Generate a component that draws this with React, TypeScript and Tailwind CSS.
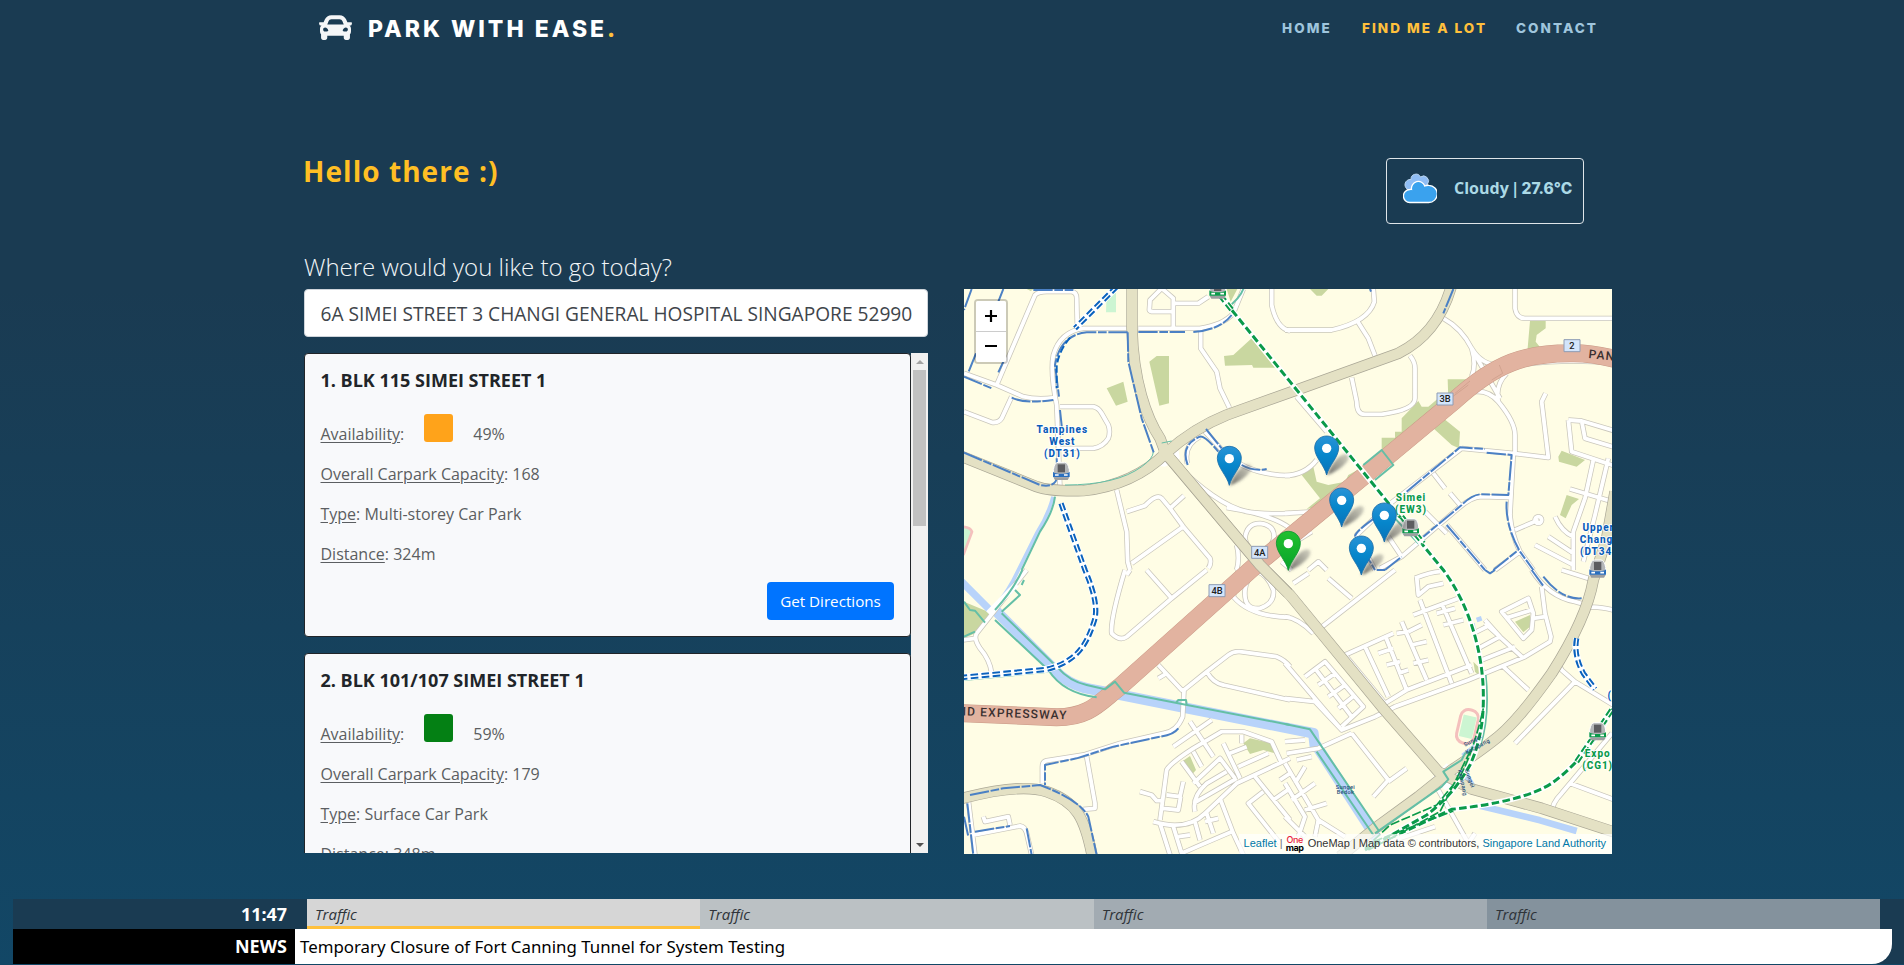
import React from "react";
import { FaCar } from "react-icons/fa";

type Quad = { x: number; y: number; d: string };

// Map artwork is drawn on a sheet at three units per CSS pixel, split in four tiles.
const parks: Quad[] = [
  { x: 0, y: 0, d: "M440,310L490,290L503,350L468,362Z M568,230L590,213L627,213L627,355L598,362Z M792,213L820,210L875,160L945,248L880,248L876,240L795,242Z M800,12L832,12L812,50Z M200,12L222,12L212,18Z" },
  { x: 975, y: 0, d: "M75,12L130,12L110,32L95,32Z M735,108L782,108L782,130L755,150L752,170L772,195L727,200Z M488,283L555,283L490,345Z M350,400L400,348L410,365L430,365L460,340L475,400L525,440L522,490L500,480L440,425L350,490L290,520L290,458L330,458L330,440L350,440Z M50,570L85,545L95,590L130,600L180,590L190,570L235,545L240,575L130,660L65,672L105,640Z M820,515L830,497L900,525L875,545L822,530Z M845,630L882,642L860,660L842,700L825,690Z" },
  { x: 0, y: 855, d: "M12,95L95,130L45,190L12,205Z M665,575L690,558L708,600L692,618Z M850,520L870,505L935,520L945,550L910,540L870,552Z" },
  { x: 975, y: 855, d: "M690,155L735,135L735,170L715,187Z M565,275L580,290L582,318L570,305Z M480,10L515,60L510,70Z" },
];

const minor: Quad[] = [
  {
    x: 0,
    y: 0,
    d: "M110,300L225,30Q235,20 260,20L335,20Q350,22 350,40L352,130 M12,265L110,300L190,335Q230,345 285,338 M155,335L125,400Q115,415 95,412L12,380 M500,130L370,130Q300,140 280,210Q270,260 290,360L300,610 M300,365L400,365Q415,368 425,385L445,420Q452,440 445,460Q430,485 400,490L300,490 M535,130L720,130Q790,120 820,85L850,12 M640,125L640,40L605,10L570,45L568,75Q570,80 580,80L640,80 M645,55L715,55L745,35 M722,135L722,190L770,260L780,310L808,368 M935,12L935,60Q950,130 990,138 M470,615L500,740L503,830L510,855 M500,680L555,662Q590,625 605,640L630,670L672,632 M630,670L670,725L750,820Q755,835 745,850 M670,725L515,835 M640,530Q770,660 860,680Q900,688 990,685 M720,455Q670,480 682,535 M735,440L800,510Q870,570 990,572 M855,760Q860,715 900,715Q945,720 942,760Q930,800 895,800Q860,795 855,760 M800,668Q940,690 990,730 M830,780Q840,820 830,855",
  },
  {
    x: 975,
    y: 0,
    d: "M0,135L140,135Q250,110 268,50L265,12 M215,105L250,160L270,212 M200,278L215,350Q215,388 240,388L290,388Q390,375 390,340L390,250Q390,230 375,212 M475,100Q530,130 560,190Q590,240 640,240 M560,190Q575,240 560,275 M565,200L645,340 M690,12L690,70Q695,100 720,100L990,100 M570,320Q610,315 640,350Q690,410 690,450L690,510 M665,265Q630,300 640,350 M700,240Q850,220 981,235 M35,335L125,440 M0,572Q60,570 95,525 M0,685L90,680 M530,490L685,505L790,518L770,350L782,325 M530,490L310,660L215,750L270,855 M445,565L480,610 M495,625L525,660 M285,850L350,815L520,670Q560,635 590,635L680,638 M685,505L675,690Q680,750 705,800L745,855 M705,800L630,855 M690,735L760,705 M750,705a10,10 0 1 0 20,0a10,10 0 1 0 -20,0 M485,720L600,855 M420,680L485,745 M310,755L350,815 M850,405L890,408L990,438 M850,405L860,500L990,543 M890,408L900,460L990,487 M925,525L900,640L865,740L865,855 M970,520L930,690L895,830 M855,612L990,652 M810,695Q830,740 865,755 M790,755L865,805 M750,780L865,840 M70,855L100,830L125,855 M0,790L80,740 M-10,830L20,855",
  },
  {
    x: 0,
    y: 855,
    d: "M200,0L50,190Q40,205 60,235Q90,270 95,310 M10,210L45,205 M495,0Q450,150 455,190Q480,215 500,200L635,85L740,0 M560,0L635,85 M510,0L500,15 M835,0L820,80Q870,140 990,142 M855,60Q850,120 900,115Q945,100 940,60Q920,10 890,5Q860,20 855,60 M595,285L665,360L672,360 M595,325L620,310 M672,360L740,305L805,255Q820,243 840,245L950,260Q975,270 990,290 M740,305Q760,340 790,345L990,390 M672,360L668,440Q650,485 610,490L480,520L370,555L260,572Q247,575 247,590L247,640 M380,560L405,700L405,715L370,718 M70,740L75,755L145,740L150,765 M40,795L180,768Q195,770 200,790L215,855 M25,690L45,855 M540,665L575,675L590,692L605,692 M600,750L620,600Q630,580 700,535L785,485L850,485L935,515L965,580 M640,530L755,450 M690,455L760,560 M665,575L720,650 M700,640L780,565L825,625 M620,675L660,680L670,635 M610,715L655,720L662,680 M580,755Q680,785 735,730L830,640L990,565 M705,725Q695,680 740,640L800,605 M700,700L830,625 M780,685L820,790L850,855 M600,760L630,855 M640,770L665,850L710,830L815,785 M705,755L720,810 M740,730L760,790 M735,755L775,745 M790,520L840,625 M810,550L860,530 M835,590L925,550 M845,495L845,520 M885,620L990,750 M910,665L865,700L960,820 M960,630L990,610 M940,690L990,655 M700,545L725,590 M655,800L690,795",
  },
  {
    x: 975,
    y: 855,
    d: "M0,140Q40,145 85,190 M105,175L330,0 M130,25L200,85 M25,40L70,10 M390,25Q440,5 465,5 M395,20L400,75L430,50L475,40 M405,90L500,340 M385,135L520,85 M470,100L560,310 M455,130L510,115 M475,165L535,150 M180,255L325,190 M180,255L300,400 M240,230L310,380 M300,195L365,360 M350,155L425,330 M280,250L325,235 M305,285L345,275 M370,185L410,165 M335,190L370,185 M380,225L425,215 M385,280L430,270 M340,310L370,300 M300,400L365,360L560,285 M270,440L330,410L550,330L720,260L795,215L798,200L780,130L770,50 M580,235L645,200L600,150 M590,270L690,230 M565,190L605,170 M600,160L710,260 M650,125L730,85L745,130L740,180L715,205Z M660,145L740,120 M745,145L780,140 M655,290L730,360 M690,520L870,335L990,408 M815,270L830,300L870,335 M0,280L170,480 M60,320L120,275L235,410L170,470 M90,295L200,440 M100,345L150,310 M130,380L180,345 M160,415L210,375 M0,385L90,395L170,480L270,440 M200,490L310,630L265,680 M310,635L365,595 M5,550L100,535L200,490 M0,515L60,510 M0,580L100,750L180,800 M20,690L90,640 M60,720L125,700 M30,640L60,590 M35,570L80,560 M0,640L60,740L40,800 M100,750L90,800 M0,740L60,800 M460,660L550,820L570,790 M800,730Q800,700 830,670L981,490 M855,640L990,690 M740,0Q790,80 870,95L905,105 M900,115Q930,105 990,122 M830,0L920,28 M330,810L450,770",
  },
];

const cycle: Quad[] = [
  {
    x: 0,
    y: 0,
    d: "M35,12L12,75 M130,12L115,50 M48,205L25,262 M130,230L115,262 M12,275L95,310 M155,338Q195,357 280,345 M12,503L240,600Q290,610 292,570L290,520 M300,375L308,450 M220,15L340,15 M503,142L380,142Q300,150 285,240L297,335 M503,142L505,230L545,400L582,505 M535,141L675,141 M700,141Q780,135 815,90 M683,540Q660,480 720,455Q735,452 775,500 M738,432L785,490 M845,540Q880,560 920,552",
  },
  {
    x: 975,
    y: 0,
    d: "M255,12L258,20 M505,12L475,85 M365,620L525,487L600,492 M605,503L680,510L670,630L585,628Q560,630 530,660L415,755 M665,650Q660,720 705,800L745,855 M485,720L600,855 M275,695Q210,740 210,755L270,855 M300,855L350,815 M625,855L700,795",
  },
  {
    x: 0,
    y: 855,
    d: "M655,475Q640,495 600,500L460,530L350,565L255,585L255,645 M30,675L130,655L240,645Q360,690 385,740L410,855 M22,700L40,855 M45,785L150,768 M200,775L215,855 M12,740L25,800",
  },
  { x: 975, y: 855, d: "M740,0L775,48 M775,20Q830,90 890,85 M600,0L615,10L630,0 M275,0L300,0" },
];

const connector: Quad[] = [
  { x: 0, y: 0, d: "M285,635Q280,680 240,740L185,855 M850,12Q840,40 800,70" },
  { x: 975, y: 0, d: "M235,540L290,495L325,540L270,585 M325,695L400,775L420,765" },
  {
    x: 0,
    y: 855,
    d: "M187,0Q160,60 105,120 M192,30L185,45 M165,60L180,75L125,125 M125,130L290,290Q330,335 380,345L435,358L465,335L492,368L990,465 M105,150L265,300Q310,370 410,382 M12,330L265,305 M12,95L30,120L45,122L75,158 M12,200L45,185 M648,398L655,390L678,390L680,402",
  },
  { x: 975, y: 855, d: "M0,462L75,478L280,780 M95,545L265,795 M602,315Q615,440 585,530L540,550L530,570L475,605L490,628L470,650L270,790" },
];

const majors =
  "M516,-10L516,130C520,290 560,400 600,460L617,505L900,840L990,930L1265,1265L1435,1460L1535,1512L1745,1570L1965,1642 M0,512L230,605Q270,620 370,617Q520,600 617,505Q700,430 800,390L990,322L1315,205C1385,170 1445,110 1475,0 M1965,620L1940,760L1900,885Q1880,1000 1775,1165Q1680,1300 1615,1355Q1560,1400 1475,1455L1375,1535L1245,1630L1140,1715 M0,1542C100,1515 200,1500 260,1520C350,1550 375,1600 397,1715";

const expressway = "M0,1284L290,1297C390,1297 420,1250 480,1205L890,838L1225,562L1480,350C1610,230 1700,205 1830,205Q1890,203 1965,222";

const easternLine = "M795,50L990,290L1290,660L1450,855C1550,990 1570,1150 1570,1230Q1572,1350 1530,1440Q1480,1530 1400,1590L1215,1695";
const changiBranch = "M1960,1270Q1880,1420 1775,1495Q1690,1550 1475,1573L1225,1690";
const downtownLoop = "M303,655L375,855Q420,960 402,1010C380,1080 350,1130 260,1153L0,1178";
const downtownEast = "M1850,1060Q1840,1110 1870,1165L1905,1212";

function Layer({ items, ...rest }: { items: Quad[] } & React.SVGProps<SVGPathElement>) {
  return (
    <>
      {items.map((q, i) => (
        <path key={i} d={q.d} transform={`translate(${q.x} ${q.y})`} {...rest} />
      ))}
    </>
  );
}

function Rail({ d, color, double = false }: { d: string; color: string; double?: boolean }) {
  return (
    <g fill="none">
      <path d={d} stroke="#fff" strokeWidth={double ? 21 : 17} />
      <path d={d} stroke={color} strokeWidth={double ? 16 : 9} strokeDasharray="23 10" />
      {double && <path d={d} stroke="#fff" strokeWidth={4} />}
    </g>
  );
}

function Station({ x, y, color }: { x: number; y: number; color: string }) {
  return (
    <g transform={`translate(${x} ${y})`}>
      <path d="M-24,18V-8Q-20,-30 -10,-30H10Q20,-30 24,-8V18Z" fill="#b4b6b8" stroke="#fff" strokeWidth="3" />
      <path d="M-11,-24H11V0H-11Z" fill="#5c5c60" />
      <path d="M-25,-2Q-20,4 0,4Q20,4 25,-2V14H-25Z" fill={color} />
      <path d="M-24,15H24L19,23H-19Z" fill="#9c9ea0" />
      <path d="M-19,8H-8M8,8H19" stroke="#fff" strokeWidth="5" />
    </g>
  );
}

function Shield({ x, y, label }: { x: number; y: number; label: string }) {
  return (
    <g transform={`translate(${x} ${y})`}>
      <rect x="-24" y="-18" width="48" height="36" fill="#d3e5fb" stroke="#8e9cb4" strokeWidth="3" />
      <text y="10" textAnchor="middle" fontFamily="Roboto, sans-serif" fontWeight="500" fontSize="28" fill="#222">
        {label}
      </text>
    </g>
  );
}

function Pin({ x, y, green = false }: { x: number; y: number; green?: boolean }) {
  return (
    <g transform={`translate(${x} ${y})`}>
      <path d="M0,0Q40,-14 62,-42Q74,-64 54,-64Q24,-56 0,0Z" fill="url(#shade)" filter="url(#soft)" />
      <path
        d="M0,-1C-7,-30 -36,-55 -36,-82C-36,-103 -20,-118 0,-118C20,-118 36,-103 36,-82C36,-55 7,-30 0,-1Z"
        fill={green ? "url(#pinGreen)" : "url(#pinBlue)"}
        stroke={green ? "#0c9530" : "#1c6da8"}
        strokeWidth="2.5"
      />
      <circle cy="-81" r="14" fill="#fff" />
    </g>
  );
}

function StationName({ x, y, color, lines }: { x: number; y: number; color: string; lines: string[] }) {
  return (
    <g fontFamily="Roboto, sans-serif" fontWeight="800" fontSize="30" letterSpacing="2.8" fill={color} textAnchor="middle" stroke="#fff" strokeWidth="5" paintOrder="stroke">
      {lines.map((l, i) => (
        <text key={l} x={x} y={y + i * 36}>
          {l}
        </text>
      ))}
    </g>
  );
}

function MapArt() {
  return (
    <svg viewBox="12 12 1944 1695" className="block h-full w-full" fill="none" strokeLinejoin="round">
      <defs>
        <linearGradient id="pinBlue" x1="0" y1="0" x2="0" y2="1">
          <stop offset="0" stopColor="#2a93d6" />
          <stop offset=".5" stopColor="#0686cb" />
          <stop offset="1" stopColor="#0a72b8" />
        </linearGradient>
        <linearGradient id="pinGreen" x1="0" y1="0" x2="0" y2="1">
          <stop offset="0" stopColor="#22c02f" />
          <stop offset="1" stopColor="#08a32a" />
        </linearGradient>
        <linearGradient id="shade" x1="0" y1="1" x2="1" y2="0">
          <stop offset="0" stopColor="#444" stopOpacity=".8" />
          <stop offset="1" stopColor="#666" stopOpacity=".3" />
        </linearGradient>
        <filter id="soft" x="-30%" y="-30%" width="160%" height="160%">
          <feGaussianBlur stdDeviation="5" />
        </filter>
      </defs>
      <rect width="1960" height="1710" fill="#fffde5" />
      <Layer items={parks} fill="#c9d7a0" />
      <path d="M440,24H468V82H438Z" fill="#ccf5d2" />
      <path d="M0,725Q30,725 36,740L10,810" fill="#ccf5d2" stroke="#f4c0bd" strokeWidth="8" />

      <g stroke="#b8d3fa">
        <path d="M0,885L90,975" strokeWidth="22" />
        <path d="M279,635Q265,690 230,745L175,855Q145,920 103,968" strokeWidth="11" />
        <path d="M105,975L275,1145Q320,1200 390,1212L450,1223L660,1265L1060,1345L1065,1385" strokeWidth="32" />
        <path d="M1065,1375L1250,1660" strokeWidth="32" />
        <path d="M1540,1015L1570,1160" strokeWidth="8" />
        <path d="M1550,1005L1565,1000" strokeWidth="14" />
        <path d="M1560,1562L1740,1606L1850,1638" strokeWidth="20" />
        <path d="M1505,1450L1545,1515" strokeWidth="18" />
        <path d="M1510,1415L1555,1380" strokeWidth="20" />
        <path d="M1140,1710L1200,1665" strokeWidth="14" />
      </g>

      <Layer items={minor} stroke="#c9c6bb" strokeWidth="16" />
      <Layer items={minor} stroke="#fff" strokeWidth="11.5" />
      <path d="M1415,1480L1460,1435L1530,1500L1455,1515Z" fill="#fff" />
      <path d="M575,540L650,470L660,520L615,545Z" fill="#fff" />
      <path d="M85,985L170,898" stroke="#fff" strokeWidth="18" />

      <path d={majors} stroke="#aaa796" strokeWidth="34" />
      <path d={majors} stroke="#e4e1c4" strokeWidth="30" />
      <path d="M315,600Q470,600 545,545Q580,520 580,500 M605,474L635,468" stroke="#64bfa6" strokeWidth="3" />
      <path d={expressway} stroke="#c99a87" strokeWidth="54" />
      <path d={expressway} stroke="#e2b3a0" strokeWidth="51" />
      <path d="M1478,335L1525,300 M1485,325L1530,288 M1595,285L1628,265L1618,240" stroke="#c99a87" strokeWidth="2" />
      <path d="M630,520L900,840L985,925" stroke="#aaa796" strokeWidth="34" />
      <path d="M605,490L900,840L1000,941" stroke="#e4e1c4" strokeWidth="30" />

      <Layer items={connector} stroke="#64bfa6" strokeWidth="6" />
      <Layer items={cycle} stroke="#4b80c4" strokeWidth="6" strokeDasharray="58 5 26 5" />

      <g transform="translate(1523 1326) rotate(13)">
        <rect x="-28" y="-52" width="54" height="102" rx="24" stroke="#f4c0bd" strokeWidth="9" fill="#fffde5" />
        <rect x="-20" y="-34" width="40" height="66" fill="#ccf5d2" />
      </g>

      <Rail d="M470,5L345,130" color="#0a62bd" double />
      <path d="M330,158Q295,200 290,245L290,310" stroke="#0a62bd" strokeWidth="6" strokeDasharray="22 9" />
      <Rail d={downtownLoop} color="#0a62bd" double />
      <Rail d={downtownEast} color="#0a62bd" double />
      <Rail d={changiBranch} color="#0a9a4a" />
      <Rail d={easternLine} color="#0a9a4a" />
      <path d="M1215,1690L1290,1620L1430,1560L1500,1475 M1225,1695L1330,1640L1440,1580L1530,1400 M1240,1670L1480,1578 M1500,1475Q1540,1400 1570,1270" stroke="#0a9a4a" strokeWidth="5" strokeDasharray="28 7" />
      <Rail d="M780,30L815,74" color="#0a9a4a" double />
      <Rail d="M1325,695L1390,775" color="#0a9a4a" double />
      <Rail d="M1955,1275L1905,1350L1850,1430" color="#0a9a4a" double />

      <Station x={773} y={18} color="#0a9a4a" />
      <Station x={304} y={562} color="#2a6fbe" />
      <Station x={1352} y={731} color="#0a9a4a" />
      <Station x={1913} y={855} color="#2a6fbe" />
      <Station x={1913} y={1343} color="#0a9a4a" />
      <StationName x={307} y={443} color="#0a5cb8" lines={["Tampines", "West", "(DT31)"]} />
      <StationName x={1353} y={647} color="#0a9a4a" lines={["Simei", "(EW3)"]} />
      <StationName x={1915} y={738} color="#0a5cb8" lines={["Upper", "Changi", "(DT34)"]} />
      <StationName x={1913} y={1415} color="#0a9a4a" lines={["Expo", "(CG1)"]} />
      <StationName x={1949} y={1241} color="#0a5cb8" lines={["("]} />
      <g fontFamily="Roboto, sans-serif" fontSize="17" fontWeight="500" fill="#27507a" letterSpacing="1">
        <text x="1127" y="1511">Sungei</text>
        <text x="1130" y="1528">Bedok</text>
        <text transform="translate(1515 1385) rotate(-28)">Sungei</text>
        <text transform="translate(1520 1408) rotate(-28)">Ketapang</text>
        <text transform="translate(1514 1455) rotate(70)">Sungei</text>
        <text transform="translate(1494 1455) rotate(78)">Ketapang</text>
      </g>
      <g fontFamily="Roboto, sans-serif" fontWeight="500" fontSize="36" letterSpacing="3.5" fill="#3a3030">
        <text x="60" y="1294" transform="rotate(2 60 1294)">EXPRESSWAY</text>
        <text x="-8" y="1291" transform="rotate(2 0 1291)">ND</text>
        <text x="1885" y="219" transform="rotate(6 1885 219)">PAN</text>
      </g>
      <Shield x={899} y={802} label="4A" />
      <Shield x={771} y={917} label="4B" />
      <Shield x={1455} y={342} label="3B" />
      <Shield x={1836} y={182} label="2" />
      <Pin x={808} y={602} />
      <Pin x={1100} y={571} />
      <Pin x={1145} y={727} />
      <Pin x={1273} y={772} />
      <Pin x={985} y={857} green />
      <Pin x={1204} y={871} />
    </svg>
  );
}

function LotMap() {
  return (
    <div className="relative h-[565px] w-[648px] overflow-hidden">
      <MapArt />
      <div className="absolute left-[10px] top-[10px] flex w-[34px] flex-col overflow-hidden rounded border-2 border-black/20 bg-clip-padding">
        <button className="flex h-[31px] items-center justify-center border-b border-[#ccc] bg-white">
          <svg viewBox="0 0 12 12" className="size-3" stroke="#000" strokeWidth="2.2"><path d="M6 0V12M0 6H12" /></svg>
        </button>
        <button className="flex h-[30px] items-center justify-center bg-white pb-0.5">
          <svg viewBox="0 0 12 12" className="size-3" stroke="#000" strokeWidth="2"><path d="M0 6H12" /></svg>
        </button>
      </div>
      <div className="absolute bottom-0 right-0 flex h-[20px] items-center whitespace-pre bg-white/70 pb-px pl-[5px] pr-[6px] font-['Liberation_Sans',sans-serif] text-[11px] text-[#333]">
        <span className="text-[#0078a8]">Leaflet</span>
        <span className="text-[#777]"> | </span>
        <span className="mr-1 flex w-[18px] flex-col items-center font-[Inter,sans-serif] text-[9px] font-medium leading-[7.500px] tracking-tighter">
          <span className="text-[#e8243c]">One</span>
          <span className="font-bold text-black">map</span>
        </span>
        <span>OneMap | Map data © contributors, </span>
        <span className="text-[#0078a8]">Singapore Land Authority</span>
      </div>
    </div>
  );
}

type Lot = { title: string; swatch: string; free: string; capacity: string; type: string; distance: string };

const lots: Lot[] = [
  { title: "1. BLK 115 SIMEI STREET 1", swatch: "bg-[#ffa31a]", free: "49%", capacity: "168", type: "Multi-storey Car Park", distance: "324m" },
  { title: "2. BLK 101/107 SIMEI STREET 1", swatch: "bg-[#048014]", free: "59%", capacity: "179", type: "Surface Car Park", distance: "348m" },
];

function LotCard({ lot }: { lot: Lot }) {
  return (
    <article className="h-[284px] shrink-0 rounded border border-[#212529] bg-[#f8f9fb] pl-[15.500px] pr-4 pt-[13px] text-base text-[#5b5e61]">
      <h3 className="text-[18px] font-bold leading-[26px] text-[#212529]">{lot.title}</h3>
      <div className="mt-[21px] flex h-[30px] items-start">
        <p className="mt-2 leading-6"><u className="underline-offset-2">Availability</u>:</p>
        <span className={`ml-5 h-7 w-[29px] rounded-[3px] ${lot.swatch}`} />
        <p className="ml-5 mt-2 leading-6">{lot.free}</p>
      </div>
      <div className="mt-[18px] flex flex-col gap-4 leading-6">
        <p><u className="underline-offset-2">Overall Carpark Capacity</u>: {lot.capacity}</p>
        <p><u className="underline-offset-2">Type</u>: {lot.type}</p>
        <p><u className="underline-offset-2">Distance</u>: {lot.distance}</p>
      </div>
      <div className="mt-4 flex justify-end">
        <button className="h-[38px] w-[127px] rounded bg-[#0074ff] text-[15.200px] text-white">Get Directions</button>
      </div>
    </article>
  );
}

function Cloud() {
  return (
    <svg viewBox="0 0 34 32" className="h-8 w-[34px]">
      <path d="M6.500 17a4.500 4.500 0 0 1 1.500-10.500 5 5 0 0 1 9.500-2.500 5 5 0 0 1 7 7l-2 5Z" fill="#8fbdf5" stroke="#b9d3ee" />
      <path d="M7 29.500a6.500 6.500 0 0 1-.2-13 4.500 4.500 0 0 1 1.700-.1 6.900 6.900 0 0 1 13.300-3.400 8 8 0 0 1 4.100-.7 8.500 8.500 0 0 1-.4 17.200Z" fill="#3aa2ee" stroke="#fff" strokeWidth="1.300" />
    </svg>
  );
}

const feeds = ["border-[#ffc03c] bg-[#d6d6d6]", "border-[#bbc1c4] bg-[#bbc1c4]", "border-[#a2abb2] bg-[#a2abb2]", "border-[#84929d] bg-[#84929d]"];

export default function App() {
  return (
    <div className="flex h-[965px] w-[1904px] flex-col overflow-hidden bg-[linear-gradient(180deg,#1a3b52_0%,#1a3b52_30%,#124766_100%)] font-['Open_Sans',sans-serif]">
      <header className="flex h-[56px] items-center justify-between pl-[319px] pr-[303px]">
        <div className="flex items-center">
          <FaCar className="size-[33px] -translate-y-px text-[#f5f6f7]" />
          <p className="ml-4 whitespace-nowrap pt-0.5 font-[Inter,sans-serif] text-[23px] font-extrabold tracking-[3px] text-white">
            PARK WITH EASE<span className="text-[#ffc03c]">.</span>
          </p>
        </div>
        <nav className="flex whitespace-nowrap pt-px font-[Inter,sans-serif] text-[13.500px] font-extrabold tracking-[2.050px] text-[#9fc5dd]">
          <a className="w-[80px]">HOME</a>
          <a className="w-[154px] text-[#ffc03c]">FIND ME A LOT</a>
          <a className="w-[85px]">CONTACT</a>
        </nav>
      </header>

      <main className="mt-[102px] flex h-[696px] w-[1308px] flex-col self-start ml-[304px]">
        <div className="flex h-[66px] justify-between">
          <h1 className="-ml-px -mt-2 text-[28px] font-bold leading-[42px] tracking-[1.050px] text-[#ffbf24]">Hello there :)</h1>
          <div className="mr-7 flex h-[66px] w-[198px] items-center rounded border border-[#dfe5e9] pl-4">
            <div className="-mt-1"><Cloud /></div>
            <p className="-mt-[5px] ml-[17px] flex items-baseline gap-[2px] whitespace-nowrap text-base font-bold text-[#abd9e6]">
              <span>Cloudy</span>
              <span>|</span>
              <span className="font-[Inter,sans-serif] text-[15.500px] font-extrabold">27.6°C</span>
            </p>
          </div>
        </div>
        <div className="mt-[26px] flex justify-between">
          <section className="flex w-[624px] flex-col">
            <h2 className="-mt-px h-10 text-[24px] font-light leading-[36px] text-[#f1f5f7]">Where would you like to go today?</h2>
            <div className="flex h-12 items-center rounded border border-[#ced4da] bg-white px-[15.500px] pt-0.5">
              <span className="w-[591px] overflow-hidden whitespace-nowrap text-[19.150px] text-[#3f454b]">
                6A SIMEI STREET 3 CHANGI GENERAL HOSPITAL SINGAPORE 529900
              </span>
            </div>
            <div className="mt-4 flex h-[500px] overflow-hidden">
              <div className="flex h-full w-[607px] flex-col gap-4 overflow-hidden">
                {lots.map((lot) => (
                  <LotCard key={lot.title} lot={lot} />
                ))}
              </div>
              <div className="flex w-[17px] flex-col items-center bg-[#f1f1f1]">
                <span className="flex h-[17px] items-center"><svg viewBox="0 0 8 4" className="h-1 w-2"><path d="M0 4L4 0L8 4Z" fill="#a3a3a3" /></svg></span>
                <span className="h-[156px] w-[13px] bg-[#c1c1c1]" />
                <span className="mt-auto flex h-[17px] items-center"><svg viewBox="0 0 8 4" className="h-1 w-2"><path d="M0 0L4 4L8 0Z" fill="#505050" /></svg></span>
              </div>
            </div>
          </section>
          <div className="pt-[39px]">
            <LotMap />
          </div>
        </div>
      </main>

      <footer className="ml-[13px] mt-[45px] h-[65px] bg-[#1a3b52]">
        <div className="flex h-[30px]">
          <p className="w-[294px] pr-5 text-right font-['Noto_Sans',sans-serif] text-[17.900px] font-bold leading-[31px] text-white">11:47</p>
          {feeds.map((tone) => (
            <p key={tone} className={`w-[393.33px] border-b-[3px] pl-2 text-[15px] italic leading-[30px] text-[#2f3439] ${tone}`}>Traffic</p>
          ))}
        </div>
        <div className="mr-3 flex h-[35px] font-['Noto_Sans',sans-serif] text-[16.850px] leading-[35px]">
          <p className="w-[282px] bg-black pr-2 text-right text-[18px] font-bold text-white">NEWS</p>
          <p className="grow rounded-br-[20px] bg-white pl-[5px] text-black">Temporary Closure of Fort Canning Tunnel for System Testing</p>
        </div>
      </footer>
    </div>
  );
}
